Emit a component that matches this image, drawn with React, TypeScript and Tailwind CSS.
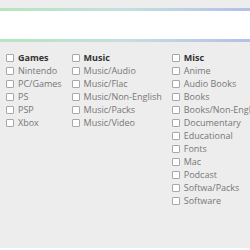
import React from "react";

const cols = [
  { title: "Games", items: ["Nintendo", "PC/Games", "PS", "PSP", "Xbox"] },
  { title: "Music", items: ["Music/Audio", "Music/Flac", "Music/Non-English", "Music/Packs", "Music/Video"] },
  {
    title: "Misc",
    items: ["Anime", "Audio Books", "Books", "Books/Non-English", "Documentary", "Educational", "Fonts", "Mac", "Podcast", "Softwa/Packs", "Software"],
  },
];

function Row({ label, bold }: { label: string; bold?: boolean }) {
  return (
    <div className="flex items-center h-[13px] whitespace-nowrap">
      <span className="w-[8px] h-[8px] border border-[#a8a8a8] bg-white rounded-[1px] shrink-0" />
      <span className={bold ? "ml-[4px] font-bold text-[#333]" : "ml-[4px] text-[#777]"}>{label}</span>
    </div>
  );
}

export default function App() {
  return (
    <div className="w-[250px] h-[250px] overflow-hidden bg-white" style={{ fontFamily: "'Open Sans', sans-serif" }}>
      <div className="h-[248px] bg-[#ededed] pt-[8px]">
        <div className="bg-gradient-to-r from-[#b5e6bd] via-[#c4dfe0] to-[#b4bfea] py-[3px] blur-[0.5px]">
          <div className="h-[28px] bg-white" />
        </div>
        <div className="flex gap-[10px] pl-[6px] pt-[9px] text-[9px] leading-[13px]">
          {cols.map((c) => (
            <div key={c.title} className="flex flex-col">
              <Row label={c.title} bold />
              {c.items.map((i) => (
                <Row key={i} label={i} />
              ))}
            </div>
          ))}
        </div>
      </div>
    </div>
  );
}
